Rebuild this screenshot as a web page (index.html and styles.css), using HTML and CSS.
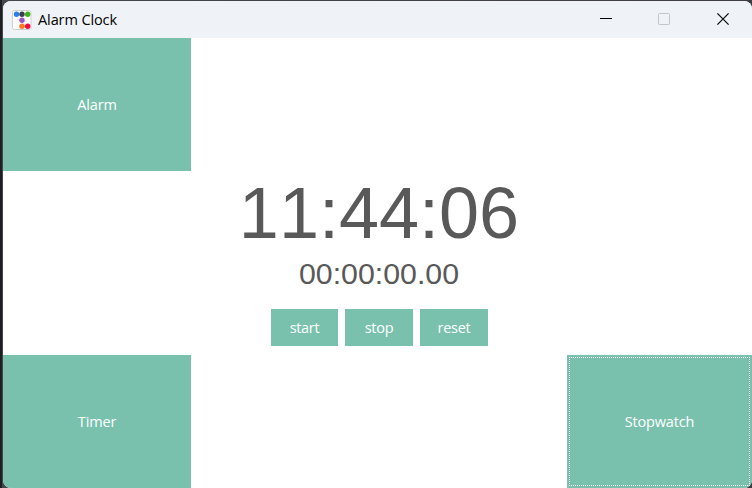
FILE: index.html
```
<!DOCTYPE html>
<html lang="en">
<head>
<meta charset="utf-8">
<title>Alarm Clock</title>
<link rel="stylesheet" href="styles.css">
</head>
<body>
<div class="window">
  <header class="titlebar">
    <svg class="app-icon" width="20" height="20" viewBox="0 0 20 20">
      <rect x=".5" y=".5" width="18.5" height="19" rx="2" fill="#fff" stroke="#d0d0d0"/>
      <circle cx="4.5" cy="4.3" r="2.7" fill="#2b7de9"/>
      <circle cx="10" cy="4.3" r="2.7" fill="#3c3f4a"/>
      <circle cx="15.7" cy="4.3" r="2.7" fill="#3faf1c"/>
      <circle cx="10" cy="10.3" r="2.7" fill="#9a55c4"/>
      <circle cx="10" cy="16.3" r="2.7" fill="#ff7a1c"/>
      <circle cx="15.7" cy="16.3" r="2.7" fill="#f5093f"/>
    </svg>
    <span class="title">Alarm Clock</span>
    <div class="controls">
      <svg width="13" height="13" viewBox="0 0 13 13"><path d="M1 5.5h12" transform="translate(1 0)" stroke="#000"/></svg>
      <svg width="12" height="13" viewBox="0 0 12 13"><rect x=".5" y=".5" width="11" height="11" rx="1" fill="none" stroke="#c2c5c8"/></svg>
      <svg width="12" height="13" viewBox="0 0 12 13"><path d="M.4.4l11.2 11.2M11.6.4L.4 11.6" stroke="#111" stroke-width="1.3"/></svg>
    </div>
  </header>
  <main class="content">
    <button class="tile alarm"><span>Alarm</span></button>
    <section class="clock">
      <div class="time">11:44:06</div>
      <div class="elapsed">00:00:00.00</div>
      <div class="actions">
        <button class="action"><span>start</span></button>
        <button class="action wide"><span>stop</span></button>
        <button class="action wide"><span>reset</span></button>
      </div>
    </section>
    <button class="tile timer"><span>Timer</span></button>
    <button class="tile stopwatch"><span>Stopwatch</span></button>
  </main>
</div>
</body>
</html>
```
FILE: styles.css
```
* { box-sizing: border-box; }
body {
  margin: 0;
  width: 752px;
  height: 488px;
  padding: 1px 0 0 3px;
  overflow: hidden;
  background: linear-gradient(90deg, #1d1f24 0, #1d1f24 2px, #45474b 2px, #3d3c42 100%);
  font-family: "Open Sans", "Noto Sans", sans-serif;
}
.window {
  width: 749px;
  height: 487px;
  border-radius: 8px;
  overflow: hidden;
  background: #fff;
}
.titlebar {
  height: 37px;
  display: flex;
  align-items: center;
  padding: 0 23px 0 9px;
  background: #eff3f8;
}
.title {
  margin-left: 6px;
  font-size: 14.5px;
  letter-spacing: -0.1px;
  color: #000;
}
.controls {
  display: flex;
  gap: 47px;
  margin-left: auto;
}
.controls svg { overflow: visible; }
.content {
  height: 450px;
  display: grid;
  grid-template-columns: 188px 376px 185px;
  grid-template-rows: 133px 184px 133px;
}
button {
  border: 0;
  padding: 0;
  background: #79c1ad;
  color: #fff;
  font-family: inherit;
  font-size: 14.5px;
  font-weight: 400;
  line-height: 20px;
  letter-spacing: -0.15px;
}
.alarm { grid-area: 1 / 1; }
.timer { grid-area: 3 / 1; }
.stopwatch {
  grid-area: 3 / 3;
  outline: 1px dotted #fff;
  outline-offset: -3px;
}
.clock {
  grid-area: 2 / 2;
  display: flex;
  flex-direction: column;
  align-items: center;
  font-family: "Liberation Sans", Arial, sans-serif;
  font-kerning: none;
  color: #595959;
}
.time {
  padding-top: 1px;
  font-size: 72px;
  line-height: 82px;
}
.elapsed {
  margin-top: 2px;
  font-size: 30.3px;
  line-height: 36px;
}
.actions {
  display: flex;
  gap: 7px;
  margin-top: 17px;
  font-family: "Open Sans", "Noto Sans", sans-serif;
}
.action {
  width: 67px;
  height: 37px;
  padding-left: 1px;
  letter-spacing: -0.3px;
}
.wide { width: 68px; }
```
